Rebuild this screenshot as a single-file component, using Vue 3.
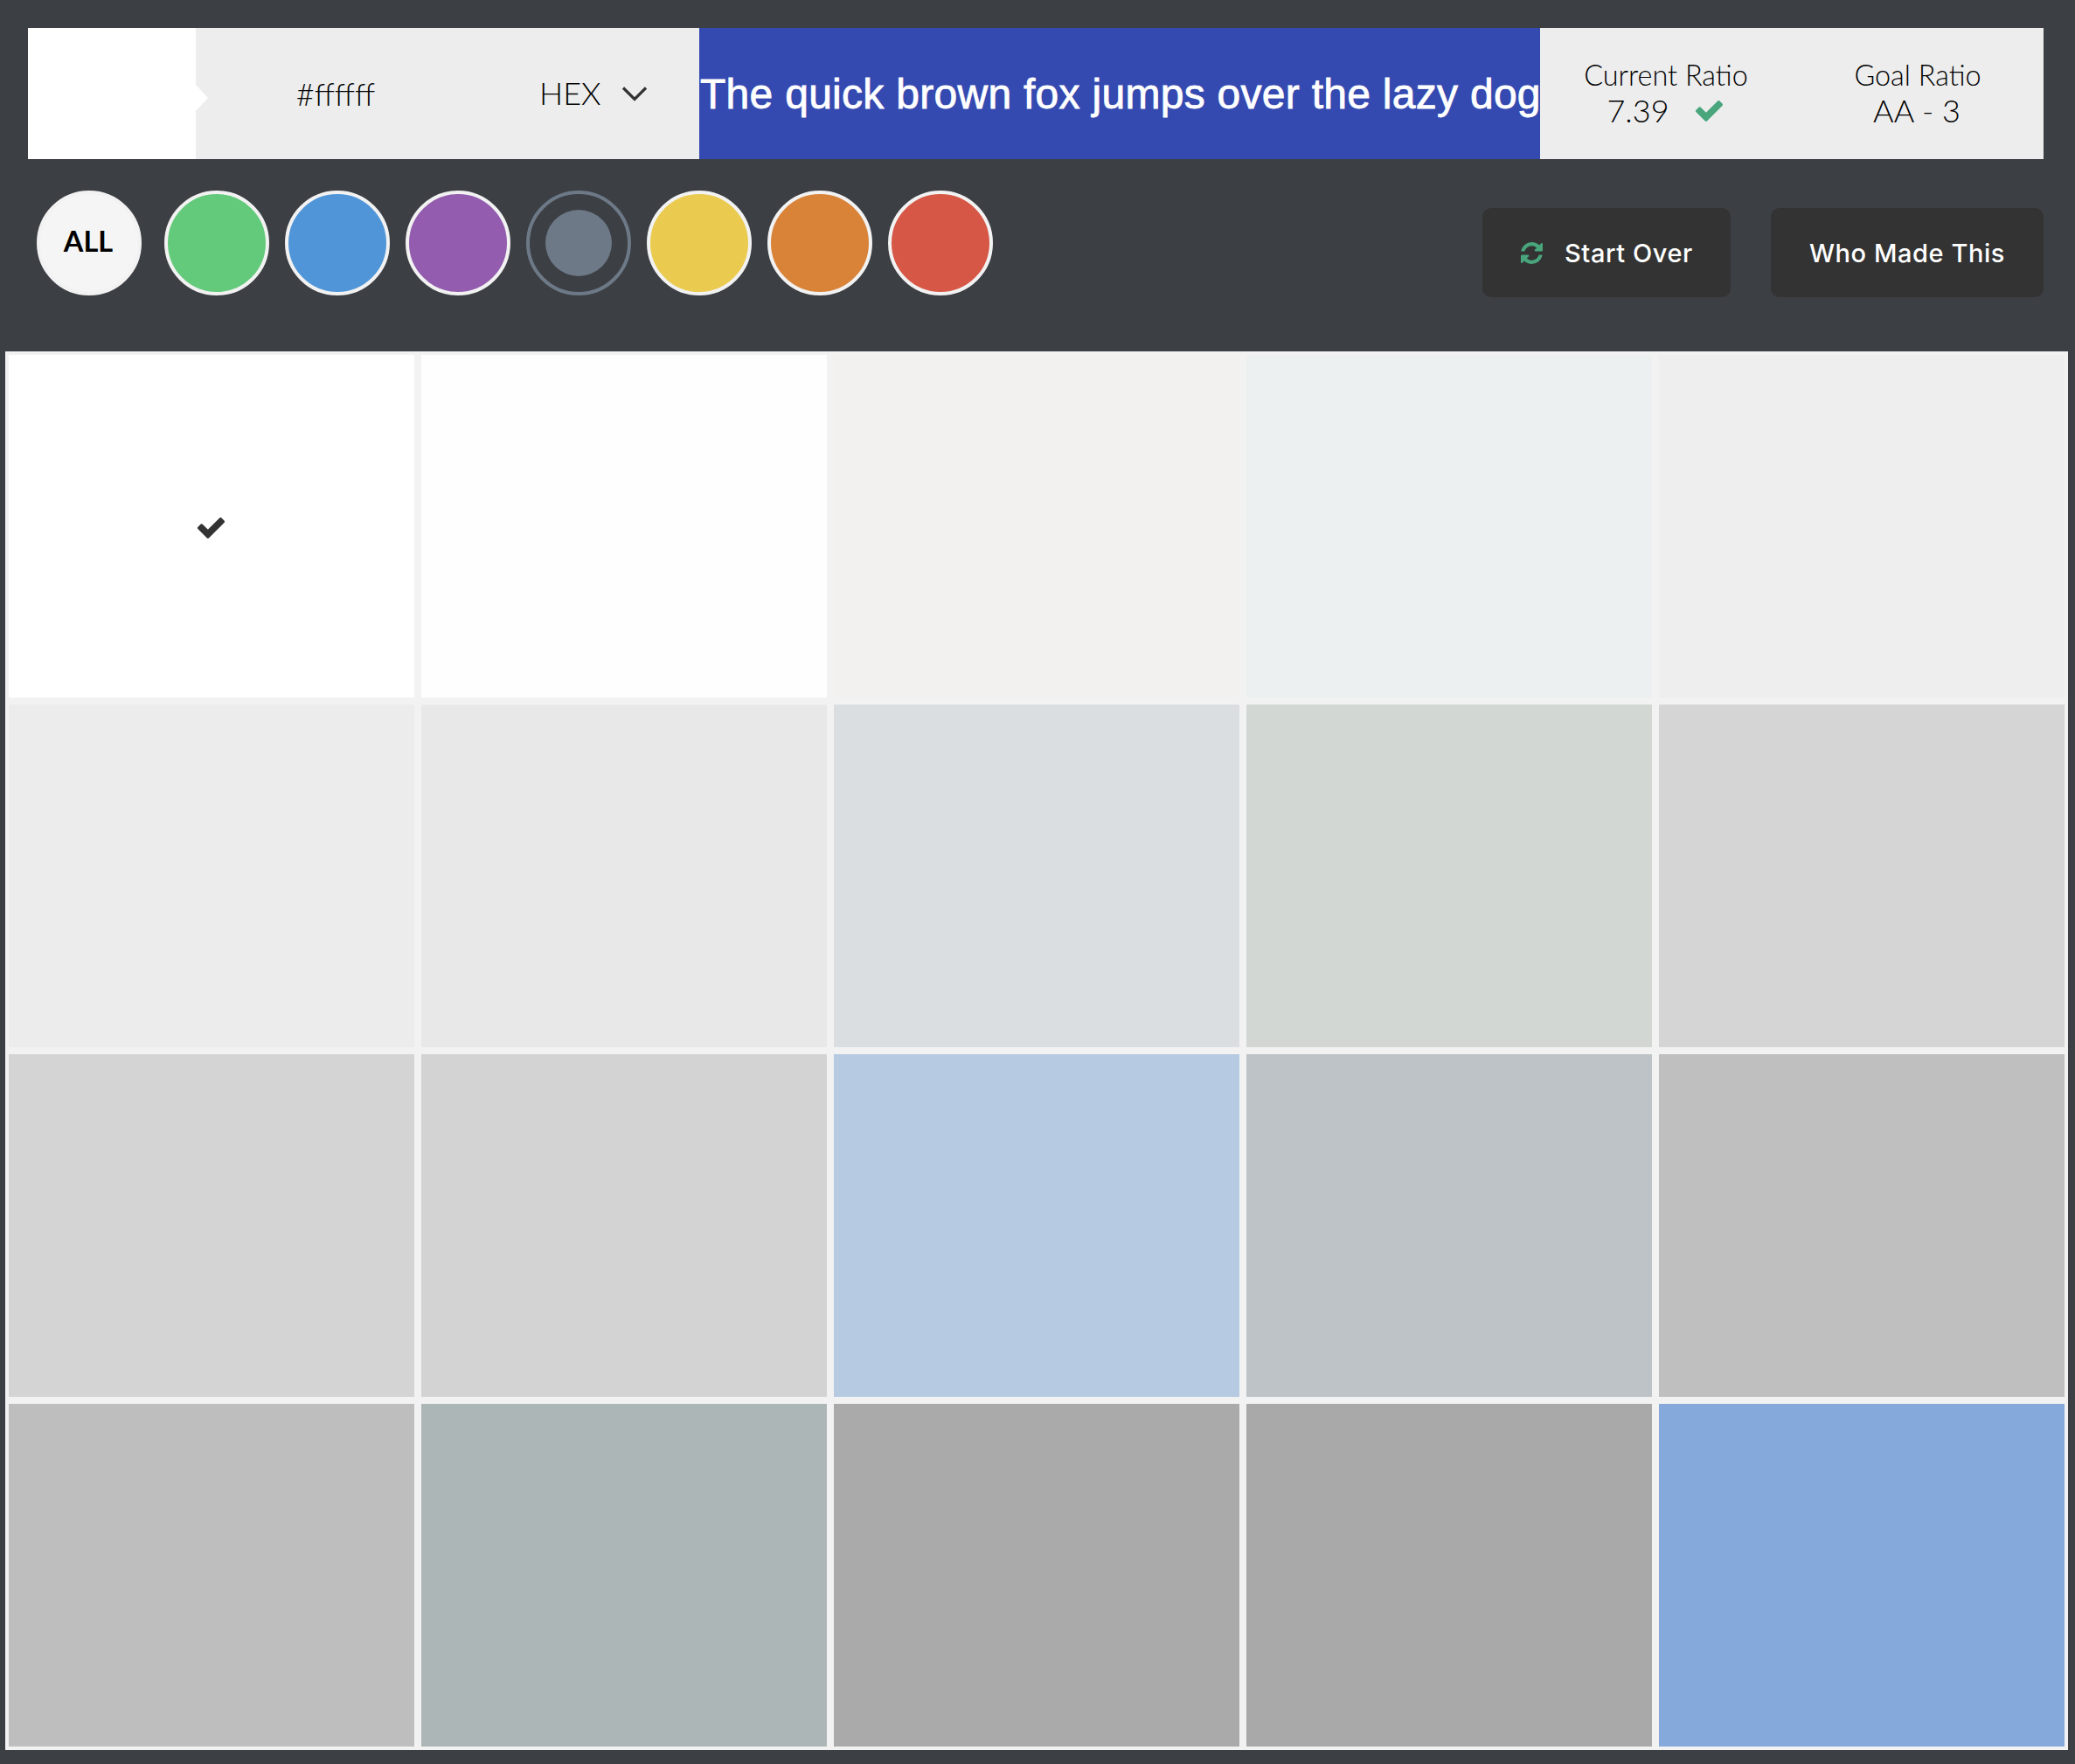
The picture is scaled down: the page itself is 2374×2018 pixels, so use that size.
<script setup>
const filters = [
  { name: 'green', color: '#64ca7b' },
  { name: 'blue', color: '#4f95d7' },
  { name: 'purple', color: '#935caf' },
  { name: 'gray', color: '#6d7987', active: true },
  { name: 'yellow', color: '#eacb50' },
  { name: 'orange', color: '#d98339' },
  { name: 'red', color: '#d65745' },
]
const swatches = [
  '#ffffff', '#fefefe', '#f2f1ef', '#ecf0f1', '#eeeeee',
  '#ececec', '#e8e8e8', '#dadee1', '#d2d7d3', '#d5d5d5',
  '#d4d4d4', '#d3d3d3', '#b6cae2', '#bdc3c7', '#bfbfbf',
  '#bebebe', '#adb6b7', '#aaaaaa', '#a9a9a9', '#85a9da',
]
const selected = 0
</script>

<template>
  <div class="page">
    <header class="bar">
      <div class="preview"></div>
      <div class="value"><span class="hex">#ffffff</span></div>
      <div class="format">
        <span class="mode">HEX</span>
        <svg class="chevron" viewBox="0 0 30 20"><path d="M2 3.500 15 16.500 28 3.500" fill="none" stroke="#333" stroke-width="3.2" /></svg>
      </div>
      <div class="sample"><span>The quick brown fox jumps over the lazy dog</span></div>
      <div class="ratio">
        <div class="label">Current Ratio</div>
        <div class="num">
          <span>7.39</span>
          <svg class="ok" viewBox="0 0 1550 1188"><path fill="#48a57c" d="M1550 232q0 40-28 68l-724 724-136 136q-28 28-68 28t-68-28l-136-136-362-362q-28-28-28-68t28-68l136-136q28-28 68-28t68 28l294 295 656-657q28-28 68-28t68 28l136 136q28 28 28 68z" /></svg>
        </div>
      </div>
      <div class="ratio">
        <div class="label">Goal Ratio</div>
        <div class="num"><span>AA - 3</span></div>
      </div>
    </header>

    <nav class="tools">
      <button class="dot all">ALL</button>
      <button v-for="f in filters" :key="f.name" class="dot" :class="{ active: f.active }" :style="{ '--c': f.color }"></button>
      <div class="spacer"></div>
      <button class="btn start">
        <svg class="sync" viewBox="0 0 1536 1536"><path fill="#48a57c" d="M1511 928q0 5-1 7-64 268-268 434.500T764 1536q-146 0-282.500-55T238 1324l-129 129q-19 19-45 19t-45-19-19-45V960q0-26 19-45t45-19h448q26 0 45 19t19 45-19 45l-137 137q71 66 161 102t187 36q134 0 250-65t186-179q11-17 53-117 8-23 30-23h192q13 0 22.500 9.500t9.500 22.500zm25-800v448q0 26-19 45t-45 19h-448q-26 0-45-19t-19-45 19-45l138-138Q969 256 768 256q-134 0-250 65T332 500q-11 17-53 117-8 23-30 23H50q-13 0-22.500-9.500T18 608v-7q65-268 270-434.500T768 0q146 0 284 55.500T1297 212l130-129q19-19 45-19t45 19 19 45z" /></svg>
        <span>Start Over</span>
      </button>
      <button class="btn who"><span>Who Made This</span></button>
    </nav>

    <main class="grid">
      <div v-for="(c, i) in swatches" :key="i" class="cell" :style="{ backgroundColor: c }">
        <svg v-if="i === selected" class="picked" viewBox="0 0 1550 1188"><path fill="#333" d="M1550 232q0 40-28 68l-724 724-136 136q-28 28-68 28t-68-28l-136-136-362-362q-28-28-28-68t28-68l136-136q28-28 68-28t68 28l294 295 656-657q28-28 68-28t68 28l136 136q28 28 28 68z" /></svg>
      </div>
    </main>
  </div>
</template>

<style>
body {
  margin: 0;
  background: #3c3f44;
}
</style>

<style scoped>
.page {
  box-sizing: border-box;
  width: 2374px;
  height: 2018px;
  padding: 32px 8px 0 6px;
  background: #3c3f44;
  overflow: hidden;
  font-family: Lato, "Open Sans", sans-serif;
  color: #000;
}
.bar {
  display: grid;
  grid-template-columns: 192px 320px 256px 962px 288px 288px;
  height: 150px;
  margin: 0 28px 0 26px;
  background: #ededed;
  font-weight: 300;
  white-space: nowrap;
}
.preview {
  position: relative;
  background: #fff;
}
.preview::after {
  content: "";
  position: absolute;
  left: 192px;
  top: 65px;
  border: solid transparent;
  border-width: 15px 0 15px 14px;
  border-left-color: #fff;
}
.value {
  display: flex;
  align-items: center;
  justify-content: center;
}
.hex {
  font-size: 36px;
}
.format {
  display: flex;
  align-items: center;
  padding-left: 73px;
}
.mode {
  margin-top: -2px;
  font-size: 36px;
}
.chevron {
  width: 30px;
  height: 20px;
  margin-left: 23px;
}
.sample {
  display: flex;
  align-items: center;
  overflow: hidden;
  padding-left: 1px;
  background: #354ab0;
  color: #fff;
  font: 400 48px "Liberation Sans", Arial, sans-serif;
  letter-spacing: 0.28px;
  -webkit-text-stroke: 0.8px #fff;
}
.ratio {
  display: flex;
  flex-direction: column;
  align-items: center;
  padding-top: 33px;
  line-height: 41px;
}
.label {
  font-size: 32.4px;
}
.num {
  display: flex;
  align-items: center;
  padding-right: 2px;
  font-size: 36px;
}
.ok {
  width: 31px;
  height: 24px;
  margin: 0 1px 0 30px;
}
.tools {
  display: flex;
  align-items: flex-start;
  box-sizing: border-box;
  height: 220px;
  margin: 0 28px 0 36px;
  padding-top: 36px;
  gap: 18px;
}
button {
  border: 0;
  padding: 0;
  margin: 0;
  font-family: inherit;
}
.dot {
  box-sizing: border-box;
  flex: none;
  width: 120px;
  height: 120px;
  border: 4px solid #f2f2f2;
  border-radius: 50%;
  background: var(--c);
}
.dot.all {
  margin-right: 8px;
  padding: 0 2px 5px 0;
  background: #f5f5f5;
  color: #000;
  font-size: 32.5px;
  font-weight: 700;
}
.dot.active {
  padding: 18px;
  border-color: var(--c);
  background-clip: content-box;
}
.spacer {
  flex: 1;
}
.btn {
  display: flex;
  align-items: center;
  box-sizing: border-box;
  height: 102px;
  margin-top: 20px;
  border-radius: 10px;
  background: #333;
  color: #fff;
  font-family: Inter, sans-serif;
  font-size: 29px;
  font-weight: 500;
  letter-spacing: 0.57px;
  white-space: nowrap;
}
.start {
  width: 284px;
  margin-right: 28px;
  padding-left: 44px;
}
.who {
  width: 312px;
  justify-content: center;
}
.sync {
  width: 25px;
  height: 25px;
  margin-right: 25px;
}
.grid {
  display: grid;
  grid-template-columns: repeat(5, 472px);
  grid-auto-rows: 400px;
}
.cell {
  box-sizing: border-box;
  display: flex;
  align-items: center;
  justify-content: center;
  border: 4px solid #f2f2f2;
}
.picked {
  width: 31px;
  height: 24px;
  margin: 3px 2px 0 0;
}
</style>
